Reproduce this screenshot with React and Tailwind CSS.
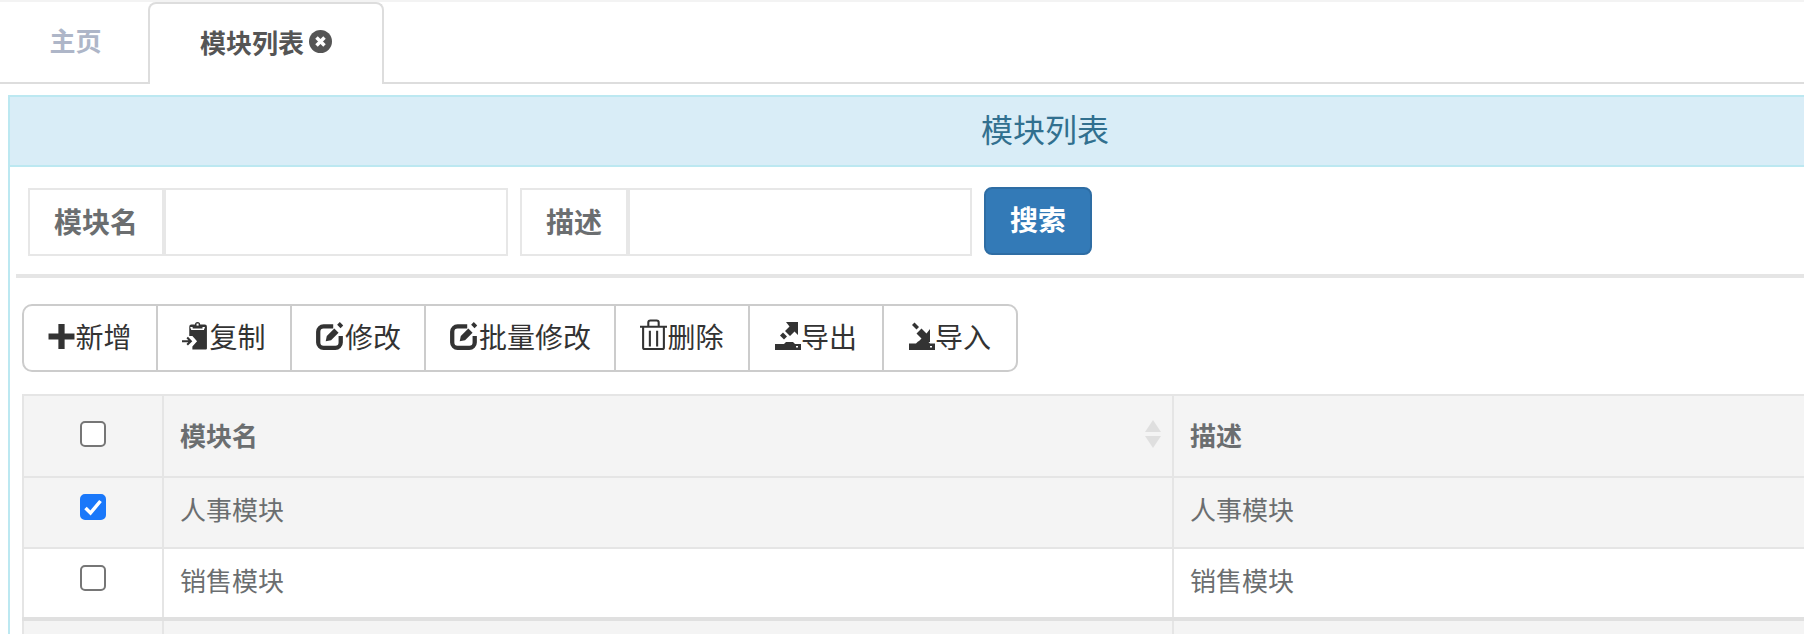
import { useState } from "react";

const font = { fontFamily: '"Noto Sans CJK SC", "Noto Sans", sans-serif' };

function PlusIcon() {
  return (
    <svg width="27" height="27" viewBox="0 0 26 26" className="shrink-0">
      <path d="M10 1h6v9h9.500v6H16v9h-6v-9H.500v-6H10z" fill="#333" />
    </svg>
  );
}

function CopyIcon() {
  return (
    <svg width="27" height="30" viewBox="0 0 26 28" className="shrink-0">
      <path
        d="M9 3h3.500a2.500 2.500 0 0 1 5 0H22a2 2 0 0 1 2 2v21a1 1 0 0 1-1 1H10v-3l4.500-5L10 14H7V5a2 2 0 0 1 2-2z"
        fill="#333"
      />
      <path d="M0 19h8M5 15.500l3.500 3.500L5 22.500" fill="none" stroke="#333" strokeWidth="2" />
      <rect x="14" y="2" width="2" height="2" fill="#fff" />
      <path d="M8 6h1.500v1.500h11V6H22" fill="none" stroke="#fff" strokeWidth="1.500" />
    </svg>
  );
}

function EditIcon() {
  return (
    <svg width="30" height="30" viewBox="0 0 28 28" className="shrink-0">
      <path
        d="M17 5H8a5 5 0 0 0-5 5v10a5 5 0 0 0 5 5h11a5 5 0 0 0 5-5v-6"
        fill="none"
        stroke="#333"
        strokeWidth="4"
      />
      <path d="M10 19l1-5 7-7 4 4-7 7z" fill="#333" />
      <rect x="21.500" y="2" width="4.500" height="3.500" transform="rotate(45 23.500 3.500)" fill="#333" />
    </svg>
  );
}

function TrashIcon() {
  return (
    <svg width="27" height="32" viewBox="0 0 26 30" className="shrink-0 mb-[2px]">
      <path
        d="M0 7h26M8 6V3a2 2 0 0 1 2-2h6a2 2 0 0 1 2 2v3M3 8v19a1.500 1.500 0 0 0 1.500 1.500h17A1.500 1.500 0 0 0 23 27V8M9.500 11v15M16.500 11v15"
        fill="none"
        stroke="#333"
        strokeWidth="2"
      />
    </svg>
  );
}

function ExportIcon() {
  return (
    <svg width="26" height="28" viewBox="0 0 26 28" className="shrink-0">
      <path d="M0 22h9l2-2h7l2 2h6v6H0z" fill="#333" />
      <rect x="21" y="24" width="2" height="1.500" fill="#fff" />
      <path d="M11 0h12v13l-3.500-3.500-4.500 4.500-5-5 4.500-4.500z" fill="#333" />
      <path d="M8 10.500l4 4-3 3-4-4z" fill="#333" />
    </svg>
  );
}

function ImportIcon() {
  return (
    <svg width="26" height="28" viewBox="0 0 26 28" className="shrink-0">
      <path d="M0 21.500h7l2-2h10l2 2h5V28H0z" fill="#333" />
      <rect x="21" y="24" width="2" height="1.500" fill="#fff" />
      <path d="M21 7v13H9l3.500-3.500-5-5 5-5 5 5z" fill="#333" />
      <path d="M5.500.5l4.500 4.500-2.500 2.500L3 3z" fill="#333" />
    </svg>
  );
}

function Checkbox({ initial }) {
  const [checked, setChecked] = useState(initial);
  return (
    <span className="relative inline-flex w-[26px] h-[26px]">
      <input
        type="checkbox"
        checked={checked}
        onChange={(e) => setChecked(e.target.checked)}
        className="appearance-none w-[26px] h-[26px] bg-white border-2 border-[#767676] rounded-[5px] checked:bg-[#1a78fa] checked:border-[#1a78fa]"
      />
      {checked && (
        <svg width="26" height="26" viewBox="0 0 26 26" className="absolute inset-0 pointer-events-none">
          <path d="M5.500 14l5 5 10-12" fill="none" stroke="#fff" strokeWidth="3.500" />
        </svg>
      )}
    </span>
  );
}

const tools = [
  { label: "新增", icon: <PlusIcon />, width: "w-[134px]" },
  { label: "复制", icon: <CopyIcon />, width: "w-[134px]" },
  { label: "修改", icon: <EditIcon />, width: "w-[134px]" },
  { label: "批量修改", icon: <EditIcon />, width: "w-[190px]" },
  { label: "删除", icon: <TrashIcon />, width: "w-[134px]" },
  { label: "导出", icon: <ExportIcon />, width: "w-[134px]" },
  { label: "导入", icon: <ImportIcon />, width: "w-[132px]" },
];

const rows = [
  { id: 1, name: "人事模块", desc: "人事模块", checked: true },
  { id: 2, name: "销售模块", desc: "销售模块", checked: false },
];

function SearchField({ label, labelWidth }) {
  return (
    <div className="flex h-[68px]">
      <div
        className={`${labelWidth} flex items-center justify-center pb-[2px] border-2 border-[#e7e7e7] text-[28px] font-bold text-[#6b6e70]`}
      >
        {label}
      </div>
      <input className="w-[344px] border-2 border-[#e7e7e7] outline-none" />
    </div>
  );
}

export default function App() {
  return (
    <div className="w-[1804px] h-[634px] overflow-hidden bg-white" style={font}>
      <div className="h-[2px] bg-[#f3f3f3]" />

      {/* tabs */}
      <div className="flex h-[82px] border-b-2 border-[#dddddd]">
        <div className="w-[148px] flex items-center justify-center pl-[3px] pb-[6px] text-[26px] font-bold text-[#aeb6c8]">
          主页
        </div>
        <div className="h-[82px] w-[236px] flex items-center justify-center gap-[5px] pb-[6px] bg-white border-2 border-b-0 border-[#dddddd] rounded-t-[8px] text-[26px] font-bold text-[#555555]">
          模块列表
          <svg width="23" height="23" viewBox="0 0 23 23" className="shrink-0">
            <circle cx="11.500" cy="11.500" r="11.500" fill="#555" />
            <path d="M7.500 7.500l8 8M15.500 7.500l-8 8" stroke="#fff" strokeWidth="3.500" />
          </svg>
        </div>
      </div>

      {/* panel */}
      <div className="w-[2074px] ml-[8px] mt-[11px] border-2 border-[#bce8f1]">
        <div className="h-[70px] flex items-center justify-center pb-[6px] bg-[#d9edf7] border-b-2 border-[#bce8f1] text-[32px] text-[#31708f]">
          模块列表
        </div>

        <div className="pl-[6px]">
          <div className="flex items-center h-[111px] pt-[2px] pl-[12px] gap-[12px] border-b-4 border-[#e5e5e5]">
            <SearchField label="模块名" labelWidth="w-[136px]" />
            <SearchField label="描述" labelWidth="w-[108px]" />
            <button className="w-[108px] h-[68px] mb-[2px] pb-[4px] bg-[#337ab7] border-2 border-[#2e6da4] rounded-[8px] text-[28px] font-bold text-white">
              搜索
            </button>
          </div>

          {/* toolbar */}
          <div className="flex w-fit mt-[26px] ml-[6px] h-[68px] border-2 border-[#cccccc] rounded-[10px]">
            {tools.map((tool) => (
              <button
                key={tool.label}
                className={`${tool.width} flex items-center justify-center pb-[4px] border-r-2 border-[#cccccc] last:border-r-0 text-[28px] text-[#333333]`}
              >
                {tool.icon}
                {tool.label}
              </button>
            ))}
          </div>

          {/* table */}
          <table className="w-[2040px] ml-[6px] mt-[22px] table-fixed border-collapse text-[26px] text-[#6b6e70]">
            <colgroup>
              <col className="w-[140px]" />
              <col className="w-[1010px]" />
              <col />
            </colgroup>
            <thead>
              <tr className="h-[82px] bg-[#f4f4f4] font-bold">
                <th className="border-2 border-[#e5e5e5] pb-[2px] text-center font-normal">
                  <Checkbox initial={false} />
                </th>
                <th className="relative border-2 border-[#e5e5e5] px-[16px] pb-[4px] text-left font-bold">
                  模块名
                  <svg width="18" height="30" viewBox="0 0 18 30" className="absolute right-[10px] top-[23px]">
                    <path d="M9 1l8 12H1z" fill="#dfdfdf" />
                    <path d="M9 29l8-12H1z" fill="#dfdfdf" />
                  </svg>
                </th>
                <th className="border-2 border-[#e5e5e5] px-[16px] pb-[4px] text-left font-bold">描述</th>
              </tr>
            </thead>
            <tbody>
              {rows.map((row) => (
                <tr key={row.id} className={`h-[71px] ${row.checked ? "bg-[#f4f4f4]" : "bg-white"}`}>
                  <td className="border-2 border-[#e5e5e5] pb-[8px] text-center">
                    <Checkbox initial={row.checked} />
                  </td>
                  <td className="border-2 border-[#e5e5e5] px-[16px] pb-[8px]">{row.name}</td>
                  <td className="border-2 border-[#e5e5e5] px-[16px] pb-[8px]">{row.desc}</td>
                </tr>
              ))}
              <tr className="h-[70px] bg-[#f4f4f4] border-t-4 border-[#e0e0e0]">
                <td className="border-x-2 border-[#e5e5e5]" />
                <td className="border-x-2 border-[#e5e5e5]" />
                <td className="border-x-2 border-[#e5e5e5]" />
              </tr>
            </tbody>
          </table>
        </div>
      </div>
    </div>
  );
}
